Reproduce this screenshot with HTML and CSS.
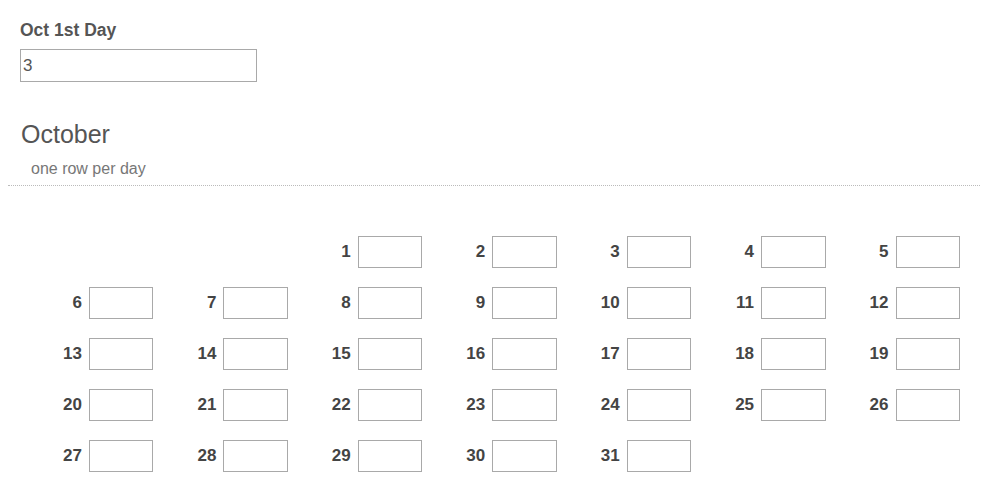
FILE: index.html
```html
<!DOCTYPE html>
<html>
<head>
<meta charset="utf-8">
<link rel="stylesheet" href="styles.css">
</head>
<body>
<div class="page">
  <div class="field">
    <label class="field-label" for="firstday">Oct 1st Day</label>
    <input class="field-input" id="firstday" type="text" value="3">
  </div>
  <div class="section">
    <h2 class="section-title">October</h2>
    <div class="section-sub">one row per day</div>
  </div>
  <div class="days">
    <div class="day"></div>
    <div class="day"></div>
    <div class="day"><span class="num">1</span><input class="box" type="text"></div>
    <div class="day"><span class="num">2</span><input class="box" type="text"></div>
    <div class="day"><span class="num">3</span><input class="box" type="text"></div>
    <div class="day"><span class="num">4</span><input class="box" type="text"></div>
    <div class="day"><span class="num">5</span><input class="box" type="text"></div>
    <div class="day"><span class="num">6</span><input class="box" type="text"></div>
    <div class="day"><span class="num">7</span><input class="box" type="text"></div>
    <div class="day"><span class="num">8</span><input class="box" type="text"></div>
    <div class="day"><span class="num">9</span><input class="box" type="text"></div>
    <div class="day"><span class="num">10</span><input class="box" type="text"></div>
    <div class="day"><span class="num">11</span><input class="box" type="text"></div>
    <div class="day"><span class="num">12</span><input class="box" type="text"></div>
    <div class="day"><span class="num">13</span><input class="box" type="text"></div>
    <div class="day"><span class="num">14</span><input class="box" type="text"></div>
    <div class="day"><span class="num">15</span><input class="box" type="text"></div>
    <div class="day"><span class="num">16</span><input class="box" type="text"></div>
    <div class="day"><span class="num">17</span><input class="box" type="text"></div>
    <div class="day"><span class="num">18</span><input class="box" type="text"></div>
    <div class="day"><span class="num">19</span><input class="box" type="text"></div>
    <div class="day"><span class="num">20</span><input class="box" type="text"></div>
    <div class="day"><span class="num">21</span><input class="box" type="text"></div>
    <div class="day"><span class="num">22</span><input class="box" type="text"></div>
    <div class="day"><span class="num">23</span><input class="box" type="text"></div>
    <div class="day"><span class="num">24</span><input class="box" type="text"></div>
    <div class="day"><span class="num">25</span><input class="box" type="text"></div>
    <div class="day"><span class="num">26</span><input class="box" type="text"></div>
    <div class="day"><span class="num">27</span><input class="box" type="text"></div>
    <div class="day"><span class="num">28</span><input class="box" type="text"></div>
    <div class="day"><span class="num">29</span><input class="box" type="text"></div>
    <div class="day"><span class="num">30</span><input class="box" type="text"></div>
    <div class="day"><span class="num">31</span><input class="box" type="text"></div>
  </div>
</div>
</body>
</html>
```
FILE: styles.css
```css
* { box-sizing: border-box; }
html, body { margin: 0; padding: 0; background: #fff; }
body {
  font-family: "Liberation Sans", Arial, sans-serif;
  color: #555;
}
.page {
  padding: 20px 4px 0 8px;
}
.field {
  padding-left: 12px;
  display: flex;
  flex-direction: column;
  align-items: flex-start;
}
.field-label {
  font-weight: bold;
  font-size: 17.5px;
  line-height: 20px;
  color: #555;
  margin-bottom: 9px;
}
.field-input {
  width: 237px;
  height: 33px;
  border: 1px solid #a9a9a9;
  padding: 0 2px;
  font-family: "Liberation Sans", Arial, sans-serif;
  font-size: 17px;
  color: #555;
  margin: 0;
  outline: none;
}
.section {
  margin-top: 38px;
  border-bottom: 1px dotted #bbb;
  padding-bottom: 7px;
}
.section-title {
  margin: 0 0 0 13px;
  font-size: 25px;
  font-weight: normal;
  line-height: 29px;
  color: #555;
}
.section-sub {
  margin: 11px 0 0 23px;
  font-size: 16px;
  line-height: 18px;
  color: #777;
}
.days {
  margin: 50px 0 0 11px;
  width: 941px;
  display: grid;
  grid-template-columns: repeat(7, 1fr);
  row-gap: 19px;
}
.day {
  display: flex;
  justify-content: flex-end;
  align-items: center;
  gap: 7px;
  height: 32px;
}
.num {
  font-weight: bold;
  font-size: 17px;
  color: #444;
}
.box {
  width: 64.5px;
  height: 32px;
  margin: 0;
  border: 1px solid #a9a9a9;
  padding: 0 2px;
  font-family: "Liberation Sans", Arial, sans-serif;
  font-size: 16px;
  outline: none;
}
```
